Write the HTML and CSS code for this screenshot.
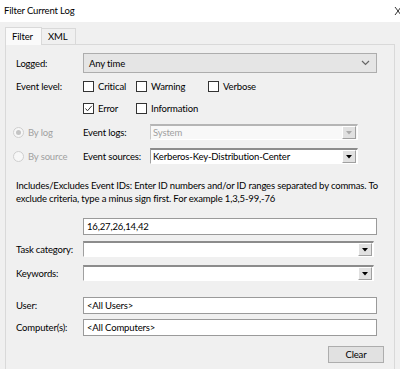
FILE: index.html
```html
<!DOCTYPE html>
<html lang="en">
<head>
  <title>Filter Current Log</title>
  <meta charset="utf-8" />
  <link rel="stylesheet" href="styles.css">
</head>
<body>
  <div class="titlebar">
    <span class="title">Filter Current Log</span>
    <svg class="close" width="8" height="10" viewBox="0 0 8 10"><path d="M1 1 L7 9 M7 1 L1 9" stroke="#333" stroke-width="1" fill="none"/></svg>
  </div>
  <div class="tabs">
    <div class="tab active">Filter</div>
    <div class="tab">XML</div>
  </div>
  <div class="panel">
    <!-- Logged -->
    <div class="row row-logged">
      <label class="lbl">Logged:</label>
      <div class="select">
        <span>Any time</span>
        <svg class="chev" width="9" height="6" viewBox="0 0 9 6"><path d="M1 1 L4.5 4.5 L8 1" stroke="#666" stroke-width="1.2" fill="none"/></svg>
      </div>
    </div>
    <!-- Event level -->
    <div class="row row-check">
      <label class="lbl">Event level:</label>
      <div class="checks">
        <span class="check w1"><span class="box"></span>Critical</span>
        <span class="check w2"><span class="box"></span>Warning</span>
        <span class="check"><span class="box"></span>Verbose</span>
      </div>
    </div>
    <div class="row row-check2">
      <span class="lbl"></span>
      <div class="checks">
        <span class="check w1"><span class="box"><svg width="9" height="9" viewBox="0 0 9 9"><path d="M1.5 4.5 L3.5 6.8 L7.8 1.8" stroke="#333" stroke-width="1" fill="none"/></svg></span>Error</span>
        <span class="check"><span class="box"></span>Information</span>
      </div>
    </div>
    <!-- By log / By source -->
    <div class="row row-log">
      <span class="radio-wrap"><span class="radio on"></span>By log</span>
      <label class="lbl">Event logs:</label>
      <div class="combo disabled">
        <span>System</span>
        <span class="arrow"><svg width="6" height="4" viewBox="0 0 6 4"><path d="M0 0 H6 L3 3.5 Z" fill="#aaa"/></svg></span>
      </div>
    </div>
    <div class="row row-source">
      <span class="radio-wrap"><span class="radio"></span>By source</span>
      <label class="lbl">Event sources:</label>
      <div class="combo">
        <span>Kerberos-Key-Distribution-Center</span>
        <span class="arrow"><svg width="6" height="4" viewBox="0 0 6 4"><path d="M0 0 H6 L3 3.5 Z" fill="#000"/></svg></span>
      </div>
    </div>
    <!-- Event IDs -->
    <p class="desc">Includes/Excludes Event IDs: Enter ID numbers and/or ID ranges separated by commas. To exclude criteria, type a minus sign first. For example 1,3,5-99,-76</p>
    <div class="row row-ids">
      <span class="lbl"></span>
      <div class="field">16,27,26,14,42</div>
    </div>
    <div class="row row-task">
      <label class="lbl">Task category:</label>
      <div class="combo wide">
        <span></span>
        <span class="arrow"><svg width="6" height="4" viewBox="0 0 6 4"><path d="M0 0 H6 L3 3.5 Z" fill="#000"/></svg></span>
      </div>
    </div>
    <div class="row row-keys">
      <label class="lbl">Keywords:</label>
      <div class="combo wide">
        <span></span>
        <span class="arrow"><svg width="6" height="4" viewBox="0 0 6 4"><path d="M0 0 H6 L3 3.5 Z" fill="#000"/></svg></span>
      </div>
    </div>
    <!-- User / Computer -->
    <div class="row row-user">
      <label class="lbl">User:</label>
      <div class="field">&lt;All Users&gt;</div>
    </div>
    <div class="row row-comp">
      <label class="lbl">Computer(s):</label>
      <div class="field">&lt;All Computers&gt;</div>
    </div>
    <div class="actions">
      <button class="btn">Clear</button>
    </div>
  </div>
</body>
</html>
```

FILE: styles.css
```css
body{
  margin: 0;
  background-color: #f0f0f0;
  font-family: Lato, "Noto Sans", sans-serif;
  font-size: 9.5px;
  letter-spacing: -0.15px;
  color: #000;
  overflow: hidden;
}
.titlebar{
  position: relative;
  height: 22px;
  background-color: #fff;
  line-height: 21px;
  padding-left: 4px;
}
.close{
  position: absolute;
  top: 6px;
  left: 394px;
}
.tabs{
  display: flex;
  align-items: flex-end;
  height: 22px;
  padding-left: 5px;
}
.tab{
  height: 15px;
  line-height: 15px;
  padding: 0 6px;
  border: 1px solid #d9d9d9;
  border-bottom: none;
  background-color: #f0f0f0;
}
.tab.active{
  position: relative;
  z-index: 1;
  width: 23px;
  height: 17px;
  line-height: 17px;
  margin-bottom: -1px;
  background-color: #fafafa;
}
.tab + .tab{
  width: 21px;
  border-left: none;
}
.panel{
  width: 390px;
  height: 340px;
  margin-left: 5px;
  padding-left: 10px;
  border: 1px solid #d9d9d9;
  box-sizing: border-box;
}
.row{
  display: flex;
  align-items: center;
}
.lbl{
  flex: none;
  width: 67px;
}
.select{
  display: flex;
  align-items: center;
  justify-content: space-between;
  width: 294px;
  height: 20px;
  padding: 0 6px 0 5px;
  border: 1px solid #adadad;
  background-color: #e5e5e5;
  box-sizing: border-box;
}
.row-logged{ margin-top: 8px; }
.row-check{ margin-top: 4px; height: 18px; }
.row-check2{ margin-top: 4px; height: 18px; }
.checks{
  display: flex;
  align-items: center;
}
.check{
  display: flex;
  align-items: center;
}
.check.w1{ width: 53px; }
.check.w2{ width: 72px; }
.box{
  display: flex;
  align-items: center;
  justify-content: center;
  width: 11px;
  height: 11px;
  margin-right: 4px;
  border: 1px solid #333;
  background-color: #fff;
  box-sizing: border-box;
}
.row-log{ margin-top: 7px; height: 16px; margin-left: -3px; }
.row-source{ margin-top: 8px; height: 16px; margin-left: -3px; }
.radio-wrap{
  display: flex;
  align-items: center;
  width: 70px;
  color: #a0a0a0;
}
.radio{
  position: relative;
  width: 11px;
  height: 11px;
  margin-right: 4px;
  border: 1px solid #cfcfcf;
  border-radius: 50%;
  background-color: #f7f7f7;
  box-sizing: border-box;
}
.radio.on::after{
  content: "";
  position: absolute;
  top: 2px;
  left: 2px;
  width: 5px;
  height: 5px;
  border-radius: 50%;
  background-color: #c4c4c4;
}
.combo{
  display: flex;
  align-items: center;
  justify-content: space-between;
  width: 208px;
  height: 16px;
  padding: 0 1px 0 2px;
  border-top: 2px solid #8c8c8c;
  border-left: 1px solid #a0a0a0;
  border-right: 1px solid #fff;
  border-bottom: 1px solid #fff;
  background-color: #fff;
  box-sizing: border-box;
}
.combo.disabled{
  color: #a0a0a0;
  background-color: #f8f8f8;
  border-top-color: #b5b5b5;
  border-left-color: #c8c8c8;
}
.combo.wide{ width: 291px; }
.arrow{
  display: flex;
  align-items: center;
  justify-content: center;
  width: 12px;
  height: 11px;
  border: 1px solid #fff;
  border-right-color: #a0a0a0;
  border-bottom-color: #a0a0a0;
  background-color: #e1e1e1;
}
.desc{
  width: 378px;
  margin: 15px 0 0 0;
  line-height: 13px;
}
.field{
  display: flex;
  align-items: center;
  width: 294px;
  height: 17px;
  padding-left: 3px;
  border: 1px solid #9a9a9a;
  background-color: #fff;
  box-sizing: border-box;
}
.row-ids{ margin-top: 13px; }
.row-task{ margin-top: 6px; }
.row-keys{ margin-top: 8px; }
.row-user{ margin-top: 16px; }
.row-comp{ margin-top: 5px; }
.actions{
  display: flex;
  justify-content: flex-end;
  width: 368px;
  margin-top: 10px;
}
.btn{
  width: 56px;
  height: 17px;
  padding: 0;
  border: 1px solid #adadad;
  background-color: #e1e1e1;
  font-family: inherit;
  font-size: inherit;
  letter-spacing: inherit;
  color: #000;
}
```
